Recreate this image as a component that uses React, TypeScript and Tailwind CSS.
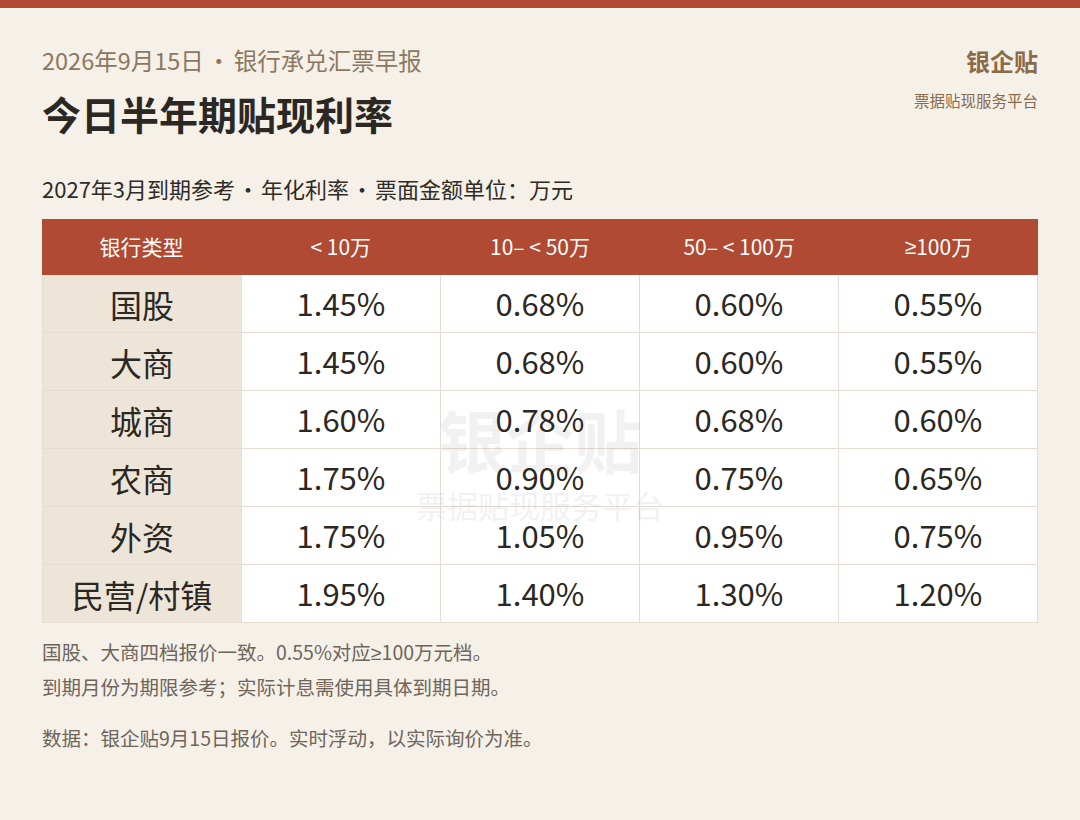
import React from "react"

const Ge = () => <span style={{ fontFamily: '"Noto Sans", sans-serif' }}>≥</span>

const cols: React.ReactNode[] = [
  "银行类型",
  "< 10万",
  "10– < 50万",
  "50– < 100万",
  <>
    <Ge />
    100万
  </>,
]

const rows: [string, string[]][] = [
  ["国股", ["1.45%", "0.68%", "0.60%", "0.55%"]],
  ["大商", ["1.45%", "0.68%", "0.60%", "0.55%"]],
  ["城商", ["1.60%", "0.78%", "0.68%", "0.60%"]],
  ["农商", ["1.75%", "0.90%", "0.75%", "0.65%"]],
  ["外资", ["1.75%", "1.05%", "0.95%", "0.75%"]],
  ["民营/村镇", ["1.95%", "1.40%", "1.30%", "1.20%"]],
]

function Dot({ w }: { w: string }) {
  return <span className={`inline-block text-center ${w}`}>·</span>
}

export default function App() {
  return (
    <div
      className="w-[1080px] h-[820px] bg-[#f5f0e8] overflow-hidden"
      style={{ fontFamily: '"Noto Sans CJK SC", "Noto Sans", sans-serif' }}
    >
      <div className="h-2 bg-[#b04a32]" />
      <div className="px-[42px]">
        {/* 头部 */}
        <div className="flex justify-between items-start pt-[37px]">
          <div>
            <div className="text-[23.5px] leading-[30px] text-[#8c7760]">
              2026年9月15日<Dot w="w-[30px]" />银行承兑汇票早报
            </div>
            <h1 className="mt-[13px] text-[39px] leading-[50px] font-bold text-[#2b2722]">今日半年期贴现利率</h1>
          </div>
          <div className="text-right">
            <div className="text-[24px] leading-[32px] font-bold text-[#8b6a48]">银企贴</div>
            <div className="mt-[13px] text-[15.5px] leading-[20px] text-[#8b6a48]">票据贴现服务平台</div>
          </div>
        </div>

        <div className="mt-[35px] text-[22px] leading-[30px] text-[#2f2b27]">
          2027年3月到期参考<Dot w="w-[26px]" />年化利率<Dot w="w-[26px]" />票面金额单位：万元
        </div>

        {/* 表格 */}
        <div className="relative mt-[16px]">
          <div className="grid grid-cols-5 h-[56px] bg-[#b04a32] text-white text-[21px]">
            {cols.map((c, i) => (
              <div key={i} className="flex items-center justify-center">{c}</div>
            ))}
          </div>
          <div className="border-l border-[#e5ddd2]">
            {rows.map(([name, vals]) => (
              <div key={name} className="grid grid-cols-5 h-[58px] border-b border-[#e5ddd2]">
                <div className="flex items-center justify-center bg-[#ede5d8] text-[32px] text-[#2b2722] border-r border-[#e5ddd2]">
                  {name}
                </div>
                {vals.map((v, i) => (
                  <div
                    key={i}
                    className="flex items-center justify-center bg-white text-[31px] text-[#2b2722] border-r border-[#e5ddd2]"
                  >
                    {v}
                  </div>
                ))}
              </div>
            ))}
          </div>
          {/* 水印 */}
          <div className="absolute left-[368px] top-[180px] w-[260px] flex flex-col items-center pointer-events-none text-[#2b2722] opacity-[0.06]">
            <div className="text-[68px] leading-[80px] font-bold">银企贴</div>
            <div className="mt-[6px] text-[31px] leading-[40px]">票据贴现服务平台</div>
          </div>
        </div>

        {/* 说明 */}
        <div className="mt-[12px] text-[19.5px] leading-[34px] text-[#6e655b]">
          <div>
            国股、大商四档报价一致。0.55%对应<Ge />100万元档。
          </div>
          <div>到期月份为期限参考；实际计息需使用具体到期日期。</div>
          <div className="mt-[17px]">数据：银企贴9月15日报价。实时浮动，以实际询价为准。</div>
        </div>
      </div>
    </div>
  )
}
